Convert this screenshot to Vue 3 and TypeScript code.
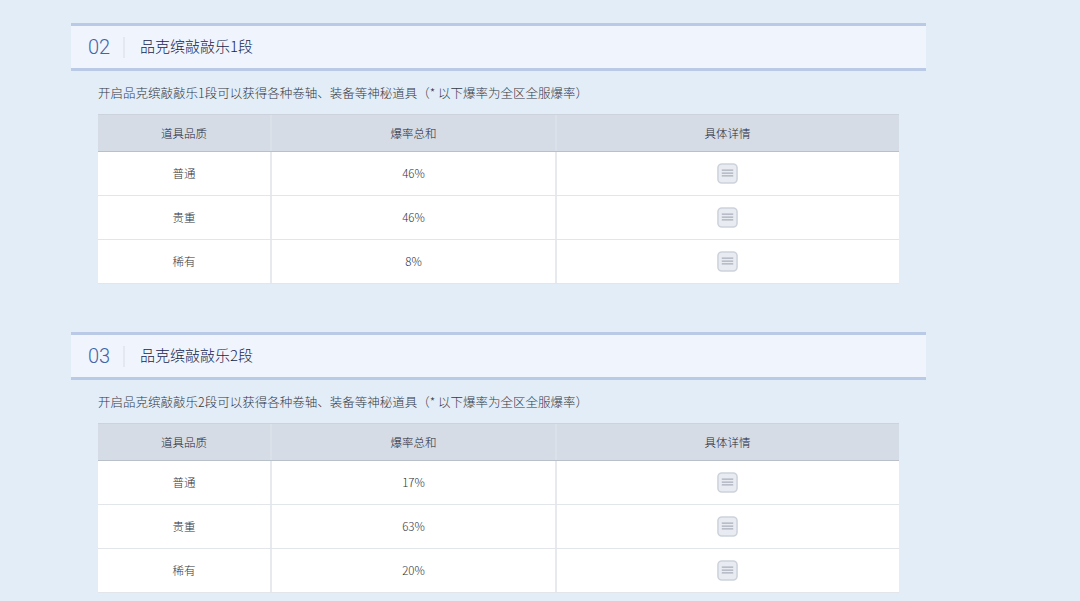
<script setup lang="ts">
interface Row { name: string; rate: string }
interface Section { no: string; title: string; rows: Row[] }

const sections: Section[] = [
  {
    no: '02',
    title: '品克缤敲敲乐1段',
    rows: [
      { name: '普通', rate: '46%' },
      { name: '贵重', rate: '46%' },
      { name: '稀有', rate: '8%' },
    ],
  },
  {
    no: '03',
    title: '品克缤敲敲乐2段',
    rows: [
      { name: '普通', rate: '17%' },
      { name: '贵重', rate: '63%' },
      { name: '稀有', rate: '20%' },
    ],
  },
]
</script>

<template>
  <main class="page">
    <section v-for="s in sections" :key="s.no" class="section">
      <header class="head">
        <span class="no">{{ s.no }}</span>
        <h2 class="title">{{ s.title }}</h2>
      </header>
      <p class="desc">开启{{ s.title }}可以获得各种卷轴、装备等神秘道具（* 以下爆率为全区全服爆率）</p>
      <div class="table">
        <div class="row th">
          <div class="cell c1">道具品质</div>
          <div class="cell c2">爆率总和</div>
          <div class="cell c3">具体详情</div>
        </div>
        <div v-for="r in s.rows" :key="r.name" class="row td">
          <div class="cell c1">{{ r.name }}</div>
          <div class="cell c2">{{ r.rate }}</div>
          <div class="cell c3">
            <svg class="icon" width="21" height="21" viewBox="0 0 22 22" aria-hidden="true">
              <rect x="1" y="1" width="20" height="20" rx="4" fill="#e8ebf1" stroke="#cdd2db" stroke-width="1.6" />
              <path d="M5 7.5h12M5 10.5h12M5 13.5h12" stroke="#a9afba" stroke-width="1.3" fill="none" />
            </svg>
          </div>
        </div>
      </div>
    </section>
  </main>
</template>

<style>
html, body { margin: 0; background: #e3edf7; overflow: hidden; }
</style>

<style scoped>
.page {
  width: 1080px;
  height: 601px;
  padding: 23px 0 0 71px;
  box-sizing: border-box;
  overflow: hidden;
  font-family: "Noto Sans CJK SC", "Noto Sans", sans-serif;
  font-weight: 300;
}
.section { width: 855px; height: 309px; }
.head {
  display: flex;
  align-items: center;
  height: 48px;
  box-sizing: border-box;
  background: #f0f4fc;
  border-top: 3px solid #b9c9e6;
  border-bottom: 3px solid #b9c9e6;
}
.no {
  width: 54px;
  height: 21px;
  padding-left: 17px;
  box-sizing: border-box;
  border-right: 2px solid #e3e8f1;
  font-family: Roboto, sans-serif;
  font-size: 20px;
  font-weight: 300;
  line-height: 21px;
  color: #3f66a8;
}
.title {
  margin: -2px 0 0 15px;
  font-size: 15px;
  font-weight: 300;
  line-height: 20px;
  color: #16264d;
}
.desc {
  margin: 0;
  padding: 13px 0 0 27px;
  box-sizing: border-box;
  height: 43px;
  font-size: 12.5px;
  line-height: 18px;
  color: #333944;
}
.table { width: 801px; margin-left: 27px; }
.row { display: flex; }
.th {
  height: 38px;
  box-sizing: border-box;
  background: #d5dce5;
  border-top: 1px solid #ccd3dd;
  border-bottom: 1px solid #b9c0ca;
  color: #1c2739;
}
.td {
  height: 44px;
  box-sizing: border-box;
  background: #fff;
  border-bottom: 1px solid #e2e5ea;
  color: #2f333a;
}
.cell {
  display: flex;
  align-items: center;
  justify-content: center;
  box-sizing: border-box;
  font-size: 11.5px;
  line-height: 16px;
}
.th .cell { padding-bottom: 1px; }
.td .c1, .td .c2 { padding-bottom: 2px; }
.c1 { width: 174px; border-right: 2px solid #e6e9ee; }
.c2 { width: 285px; border-right: 2px solid #e6e9ee; }
.c3 { width: 342px; padding-right: 1px; }
.th .c1, .th .c2 { border-right-color: #dbe1e9; }
.icon { display: block; }
</style>
